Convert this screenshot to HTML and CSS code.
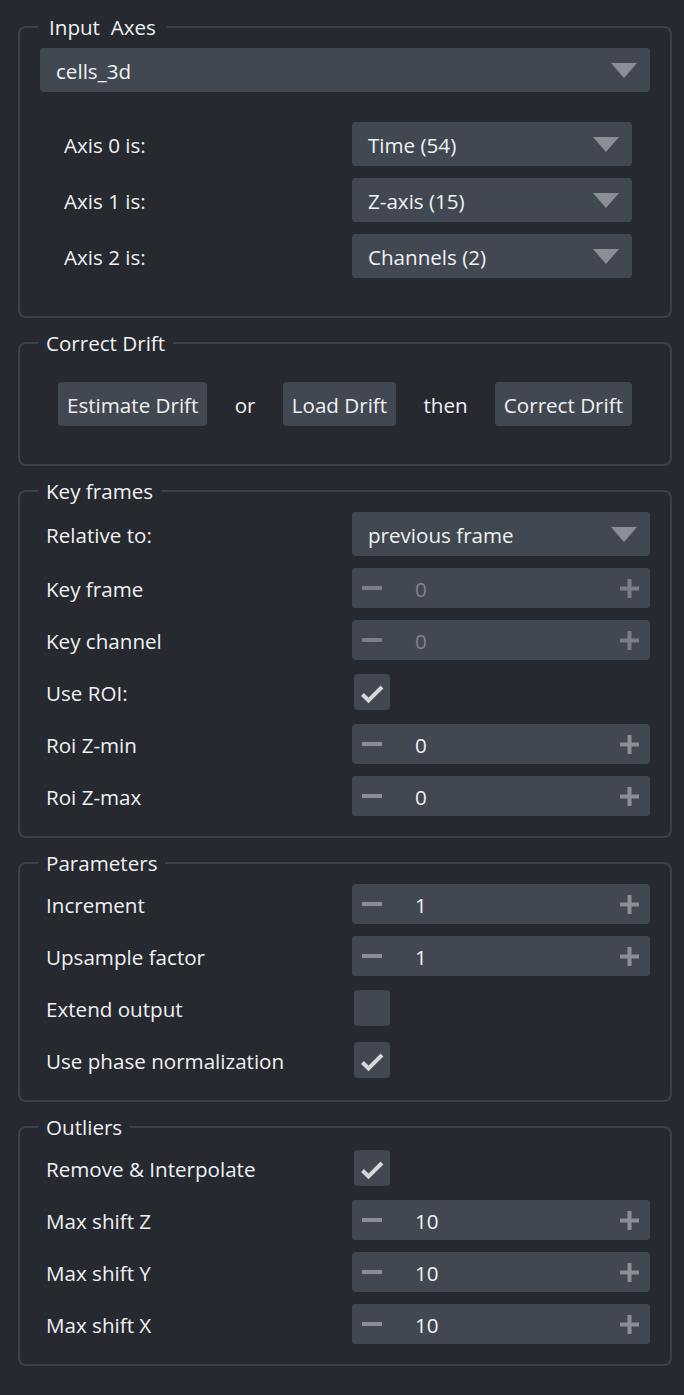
FILE: index.html
```html
<!DOCTYPE html>
<html lang="en">
<head>
<meta charset="utf-8">
<title>Drift correction</title>
<link rel="stylesheet" href="styles.css">
</head>
<body>
<div class="panel">

  <fieldset class="group">
    <legend class="group-title group-title--wide">Input&nbsp; Axes</legend>
    <div class="combo"><span class="combo-text">cells_3d</span><svg class="arrow" viewBox="0 0 26 15"><path d="M0 0H26L13 15Z"/></svg></div>
    <div class="subform">
      <div class="form-grid form-grid--tall">
        <span class="field-label">Axis 0 is:</span>
        <div class="combo"><span class="combo-text">Time (54)</span><svg class="arrow" viewBox="0 0 26 15"><path d="M0 0H26L13 15Z"/></svg></div>
        <span class="field-label">Axis 1 is:</span>
        <div class="combo"><span class="combo-text">Z-axis (15)</span><svg class="arrow" viewBox="0 0 26 15"><path d="M0 0H26L13 15Z"/></svg></div>
        <span class="field-label">Axis 2 is:</span>
        <div class="combo"><span class="combo-text">Channels (2)</span><svg class="arrow" viewBox="0 0 26 15"><path d="M0 0H26L13 15Z"/></svg></div>
      </div>
    </div>
  </fieldset>

  <fieldset class="group">
    <legend class="group-title">Correct Drift</legend>
    <div class="button-row">
      <button class="btn">Estimate Drift</button>
      <span class="joiner">or</span>
      <button class="btn">Load Drift</button>
      <span class="joiner">then</span>
      <button class="btn">Correct Drift</button>
    </div>
  </fieldset>

  <fieldset class="group">
    <legend class="group-title">Key frames</legend>
    <div class="form-grid">
      <span class="field-label">Relative to:</span>
      <div class="combo"><span class="combo-text">previous frame</span><svg class="arrow" viewBox="0 0 26 15"><path d="M0 0H26L13 15Z"/></svg></div>

      <span class="field-label">Key frame</span>
      <div class="spin spin--disabled">
        <svg class="minus" viewBox="0 0 20 4"><rect width="20" height="4"/></svg>
        <span class="spin-value">0</span>
        <svg class="plus" viewBox="0 0 19 19"><rect x="7.5" width="4" height="19"/><rect y="7.5" width="19" height="4"/></svg>
      </div>

      <span class="field-label">Key channel</span>
      <div class="spin spin--disabled">
        <svg class="minus" viewBox="0 0 20 4"><rect width="20" height="4"/></svg>
        <span class="spin-value">0</span>
        <svg class="plus" viewBox="0 0 19 19"><rect x="7.5" width="4" height="19"/><rect y="7.5" width="19" height="4"/></svg>
      </div>

      <span class="field-label">Use ROI:</span>
      <div class="check-cell"><span class="checkbox"><svg viewBox="0 0 36 36"><path d="M8.5 20.5L14.5 26.5L28 13"/></svg></span></div>

      <span class="field-label">Roi Z-min</span>
      <div class="spin">
        <svg class="minus" viewBox="0 0 20 4"><rect width="20" height="4"/></svg>
        <span class="spin-value">0</span>
        <svg class="plus" viewBox="0 0 19 19"><rect x="7.5" width="4" height="19"/><rect y="7.5" width="19" height="4"/></svg>
      </div>

      <span class="field-label">Roi Z-max</span>
      <div class="spin">
        <svg class="minus" viewBox="0 0 20 4"><rect width="20" height="4"/></svg>
        <span class="spin-value">0</span>
        <svg class="plus" viewBox="0 0 19 19"><rect x="7.5" width="4" height="19"/><rect y="7.5" width="19" height="4"/></svg>
      </div>
    </div>
  </fieldset>

  <fieldset class="group">
    <legend class="group-title">Parameters</legend>
    <div class="form-grid">
      <span class="field-label">Increment</span>
      <div class="spin">
        <svg class="minus" viewBox="0 0 20 4"><rect width="20" height="4"/></svg>
        <span class="spin-value">1</span>
        <svg class="plus" viewBox="0 0 19 19"><rect x="7.5" width="4" height="19"/><rect y="7.5" width="19" height="4"/></svg>
      </div>

      <span class="field-label">Upsample factor</span>
      <div class="spin">
        <svg class="minus" viewBox="0 0 20 4"><rect width="20" height="4"/></svg>
        <span class="spin-value">1</span>
        <svg class="plus" viewBox="0 0 19 19"><rect x="7.5" width="4" height="19"/><rect y="7.5" width="19" height="4"/></svg>
      </div>

      <span class="field-label">Extend output</span>
      <div class="check-cell"><span class="checkbox"></span></div>

      <span class="field-label">Use phase normalization</span>
      <div class="check-cell"><span class="checkbox"><svg viewBox="0 0 36 36"><path d="M8.5 20.5L14.5 26.5L28 13"/></svg></span></div>
    </div>
  </fieldset>

  <fieldset class="group">
    <legend class="group-title">Outliers</legend>
    <div class="form-grid">
      <span class="field-label">Remove &amp; Interpolate</span>
      <div class="check-cell"><span class="checkbox"><svg viewBox="0 0 36 36"><path d="M8.5 20.5L14.5 26.5L28 13"/></svg></span></div>

      <span class="field-label">Max shift Z</span>
      <div class="spin">
        <svg class="minus" viewBox="0 0 20 4"><rect width="20" height="4"/></svg>
        <span class="spin-value">10</span>
        <svg class="plus" viewBox="0 0 19 19"><rect x="7.5" width="4" height="19"/><rect y="7.5" width="19" height="4"/></svg>
      </div>

      <span class="field-label">Max shift Y</span>
      <div class="spin">
        <svg class="minus" viewBox="0 0 20 4"><rect width="20" height="4"/></svg>
        <span class="spin-value">10</span>
        <svg class="plus" viewBox="0 0 19 19"><rect x="7.5" width="4" height="19"/><rect y="7.5" width="19" height="4"/></svg>
      </div>

      <span class="field-label">Max shift X</span>
      <div class="spin">
        <svg class="minus" viewBox="0 0 20 4"><rect width="20" height="4"/></svg>
        <span class="spin-value">10</span>
        <svg class="plus" viewBox="0 0 19 19"><rect x="7.5" width="4" height="19"/><rect y="7.5" width="19" height="4"/></svg>
      </div>
    </div>
  </fieldset>

</div>
</body>
</html>
```

FILE: styles.css
```css
html, body {
  margin: 0;
  background: #262930;
}

body {
  font-family: "Open Sans", "Noto Sans", "DejaVu Sans", sans-serif;
  font-size: 20.6px;
  color: #f0f1f2;
  min-height: 1395px;
}

.panel {
  padding: 13px 12px 0 18px;
}

.group {
  margin: 0 0 11px;
  min-width: 0;
  padding: 7px 20px 20px;
  border: 2px solid #3c4048;
  border-radius: 8px;
}

.group-title {
  margin-left: -2px;
  padding: 1px 8px 0;
  line-height: 27px;
  height: 28px;
  box-sizing: border-box;
  font-size: 20.6px;
}

.group-title--wide {
  padding-left: 11px;
  padding-right: 11px;
}

.combo {
  height: 44px;
  box-sizing: border-box;
  display: flex;
  align-items: center;
  justify-content: space-between;
  padding: 0 13px 0 16px;
  background: #414851;
  border-radius: 4px;
  white-space: nowrap;
}

.combo-text {
  padding-top: 2px;
}

.arrow {
  width: 26px;
  height: 15px;
  fill: #8b8e94;
  flex: none;
}

.subform {
  margin-top: 12px;
  padding: 18px;
}

.form-grid {
  display: grid;
  grid-template-columns: 1fr 1fr;
  column-gap: 14px;
  row-gap: 12px;
  align-items: center;
}

.field-label {
  padding-left: 6px;
  padding-top: 2px;
  white-space: nowrap;
}

.spin {
  height: 40px;
  display: flex;
  align-items: center;
  background: #414851;
  border-radius: 4px;
  padding: 0 11px 0 10px;
}

.minus {
  width: 20px;
  height: 4px;
  fill: #8b8e94;
  flex: none;
}

.plus {
  width: 19px;
  height: 19px;
  fill: #8b8e94;
  flex: none;
  margin-left: auto;
}

.spin-value {
  margin-left: 33px;
  padding-top: 2px;
}

.spin--disabled .spin-value {
  color: #80838a;
}

.spin--disabled .minus,
.spin--disabled .plus {
  fill: #7b7e85;
}

.check-cell {
  height: 40px;
  display: flex;
  align-items: center;
}

.checkbox {
  width: 36px;
  height: 36px;
  margin-left: 2px;
  background: #414851;
  border-radius: 4px;
  display: block;
}

.checkbox svg {
  width: 36px;
  height: 36px;
  display: block;
  fill: none;
  stroke: #d6d7d9;
  stroke-width: 4;
}

.button-row {
  display: flex;
  align-items: center;
  justify-content: space-between;
  padding: 18px;
}

.btn {
  height: 44px;
  padding: 2px 9px 0;
  border: none;
  border-radius: 4px;
  background: #414851;
  color: #f0f1f2;
  font: inherit;
  white-space: nowrap;
}

.joiner {
  padding-top: 2px;
  white-space: nowrap;
}
```
